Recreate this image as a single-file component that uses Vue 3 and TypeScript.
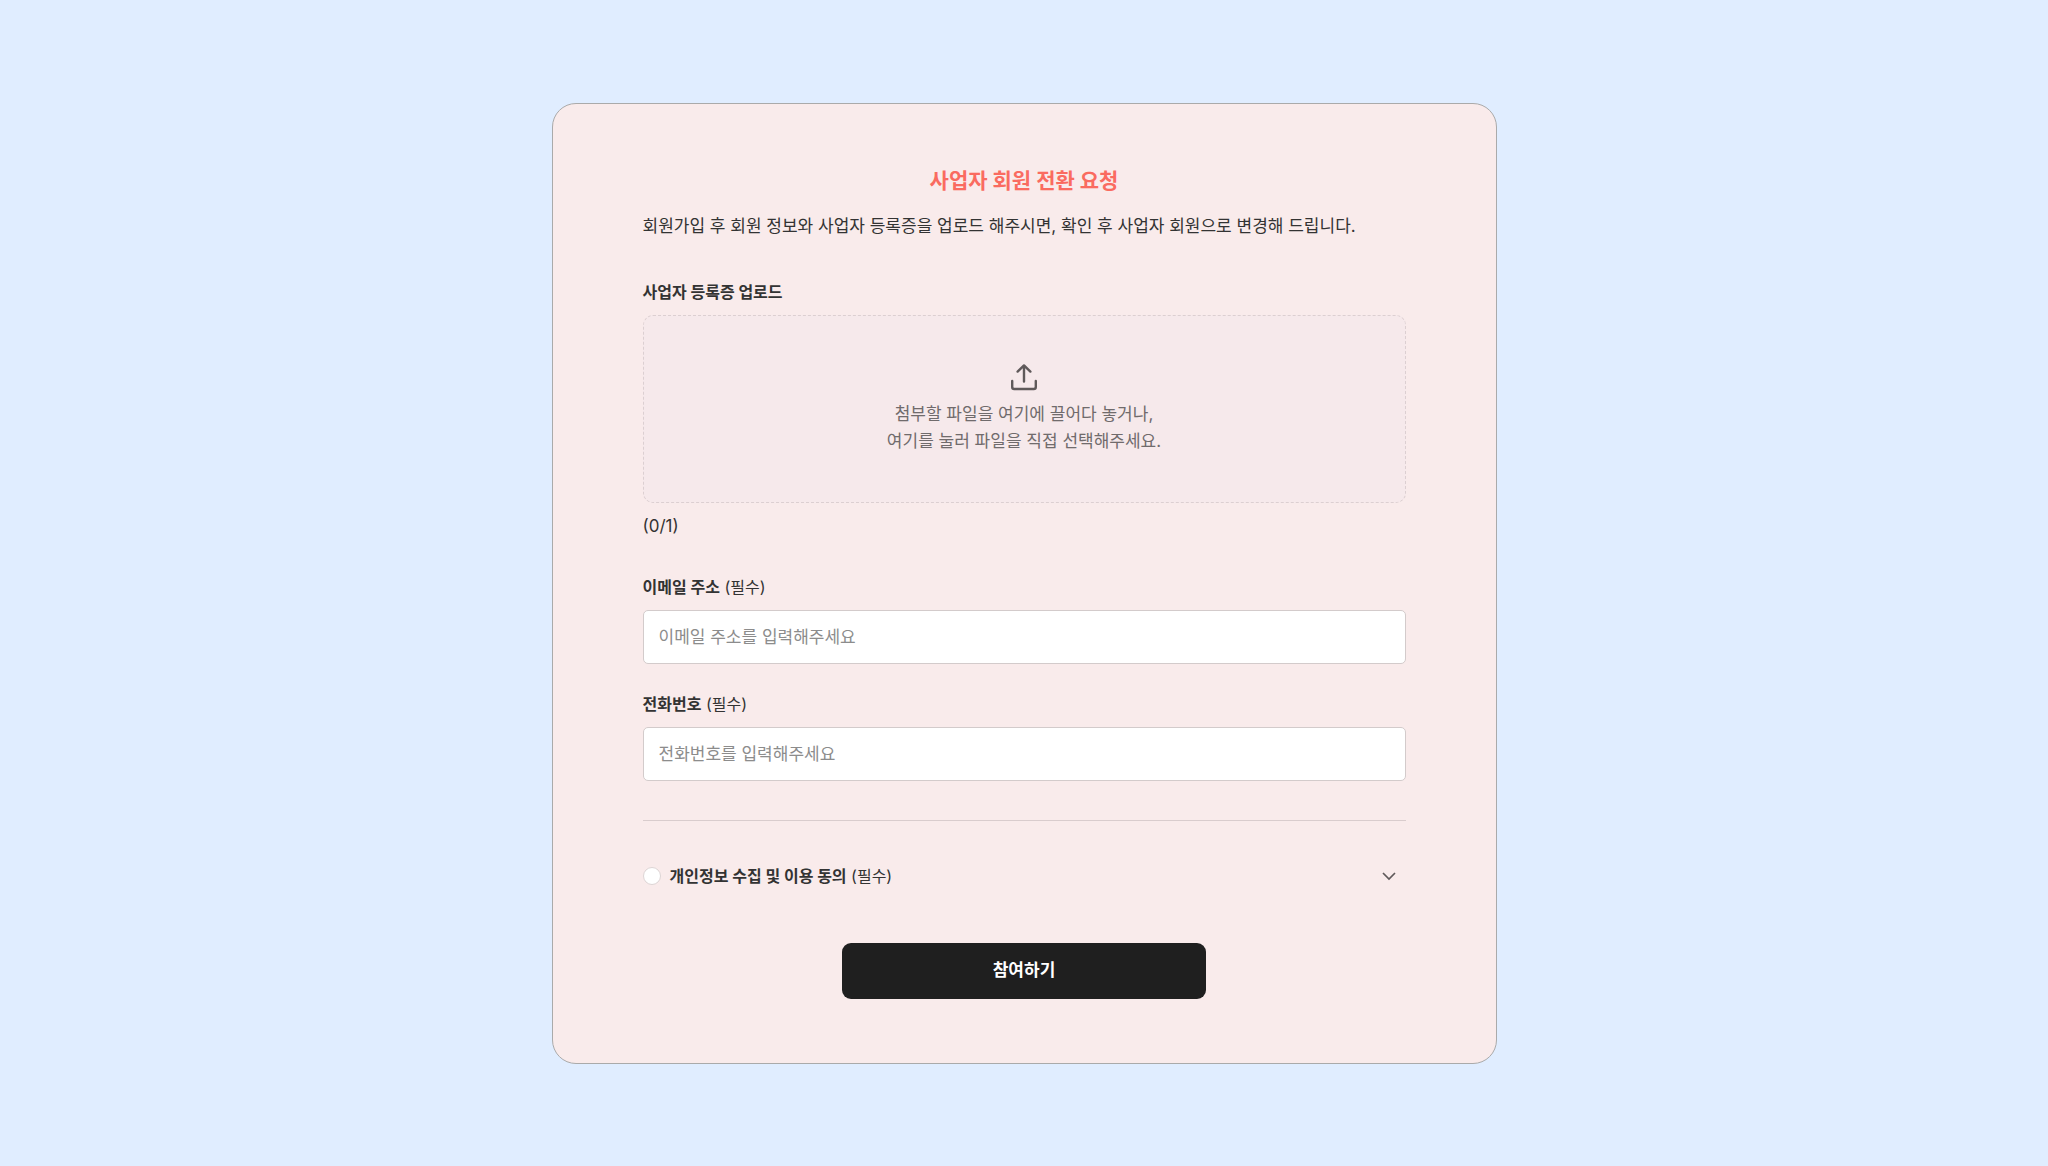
<script setup lang="ts">
import { ref } from 'vue'

const email = ref('')
const phone = ref('')
const agreed = ref(false)
const files = ref<File[]>([])
const maxFiles = 1

function onFileChange(event: Event) {
  const input = event.target as HTMLInputElement
  files.value = Array.from(input.files ?? []).slice(0, maxFiles)
}

function onDrop(event: DragEvent) {
  files.value = Array.from(event.dataTransfer?.files ?? []).slice(0, maxFiles)
}
</script>

<template>
  <main class="page">
    <form class="card" @submit.prevent>
      <h1 class="title">사업자 회원 전환 요청</h1>
      <p class="description">회원가입 후 회원 정보와 사업자 등록증을 업로드 해주시면, 확인 후 사업자 회원으로 변경해 드립니다.</p>

      <section class="field">
        <label class="label" for="license"><strong>사업자 등록증 업로드</strong></label>
        <label class="dropzone" for="license" @dragover.prevent @drop.prevent="onDrop">
          <svg class="upload-icon" viewBox="0 0 32 32" aria-hidden="true">
            <path d="M16 20.500V4.400M9.600 10.600L16 4.400l6.400 6.200M4.200 20v6a2 2 0 0 0 2 2h19.600a2 2 0 0 0 2-2v-6" />
          </svg>
          <span>첨부할 파일을 여기에 끌어다 놓거나,<br />여기를 눌러 파일을 직접 선택해주세요.</span>
        </label>
        <input id="license" class="visually-hidden" type="file" @change="onFileChange" />
        <p class="count">({{ files.length }}/{{ maxFiles }})</p>
      </section>

      <div class="field">
        <label class="label" for="email"><strong>이메일 주소</strong> (필수)</label>
        <input id="email" v-model="email" class="text-input" type="email" placeholder="이메일 주소를 입력해주세요" />
      </div>

      <div class="field">
        <label class="label" for="phone"><strong>전화번호</strong> (필수)</label>
        <input id="phone" v-model="phone" class="text-input" type="tel" placeholder="전화번호를 입력해주세요" />
      </div>

      <div class="agreement">
        <input id="agree" v-model="agreed" class="check" type="checkbox" />
        <label class="label agree-label" for="agree"><strong>개인정보 수집 및 이용 동의</strong> (필수)</label>
        <button class="toggle" type="button" aria-label="약관 펼치기">
          <svg viewBox="0 0 16 16" aria-hidden="true"><path d="M2 5l6 6 6-6" /></svg>
        </button>
      </div>

      <button class="submit" type="submit">참여하기</button>
    </form>
  </main>
</template>

<style>
body {
  margin: 0;
  background: #e0edff;
}
</style>

<style scoped>
.page,
.page * {
  box-sizing: border-box;
}

.page {
  min-height: 100vh;
  display: flex;
  align-items: center;
  justify-content: center;
  padding: 40px 20px;
  font-family: Inter, 'Noto Sans CJK KR', sans-serif;
  color: #333;
}

.card {
  width: 100%;
  max-width: 945px;
  display: flex;
  flex-direction: column;
  padding: 61px 90px 64px;
  border: 1px solid #aaa;
  border-radius: 24px;
  background: #f9ebeb;
}

.title {
  margin: 0 0 16px;
  font-size: 21px;
  font-weight: 700;
  line-height: 32px;
  text-align: center;
  color: #fa6b60;
}

.description {
  margin: 0 0 40px;
  font-size: 17px;
  line-height: 27px;
}

.field {
  display: flex;
  flex-direction: column;
  position: relative;
  margin-bottom: 28px;
}

section.field {
  margin-bottom: 37px;
}

.label {
  font-size: 16px;
  line-height: 24px;
}

.label strong {
  font-weight: 700;
}

.dropzone {
  display: flex;
  flex-direction: column;
  align-items: center;
  gap: 8px;
  margin: 11px 0;
  padding: 45px 20px 47px;
  border: 1px dashed #dccfd1;
  border-radius: 10px;
  background: #f6e9eb;
  font-size: 17px;
  line-height: 27px;
  text-align: center;
  color: #706b6c;
  cursor: pointer;
}

.upload-icon {
  width: 32px;
  height: 32px;
  fill: none;
  stroke: #5f595a;
  stroke-width: 2.4;
  stroke-linecap: round;
  stroke-linejoin: round;
}

.visually-hidden {
  position: absolute;
  width: 1px;
  height: 1px;
  overflow: hidden;
  opacity: 0;
}

.count {
  margin: 0;
  font-size: 17px;
  line-height: 24px;
}

.text-input {
  width: 100%;
  height: 54px;
  margin-top: 11px;
  padding: 0 15px;
  border: 1px solid #d3cbcb;
  border-radius: 5px;
  outline: none;
  background: #fff;
  font: inherit;
  font-size: 17px;
  color: #333;
}

.text-input::placeholder {
  color: #8c8c8c;
}

.agreement {
  display: flex;
  align-items: center;
  margin-top: 11px;
  padding: 43px 9px 55px 0;
  border-top: 1px solid #d9cccd;
}

.check {
  appearance: none;
  width: 18px;
  height: 18px;
  margin: 0;
  border: 1px solid #ddd5d5;
  border-radius: 50%;
  background: #fff;
}

.check:checked {
  background: #1f1f1f;
}

.agree-label {
  flex: 1;
  padding-left: 9px;
}

.toggle {
  display: flex;
  padding: 0;
  border: 0;
  background: none;
  cursor: pointer;
}

.toggle svg {
  width: 16px;
  height: 16px;
  fill: none;
  stroke: #5f595a;
  stroke-width: 1.7;
}

.submit {
  align-self: center;
  width: 100%;
  max-width: 364px;
  height: 56px;
  padding: 0 0 4px;
  border: 0;
  border-radius: 9px;
  background: #1f1f1f;
  font: inherit;
  font-size: 17px;
  font-weight: 700;
  color: #fff;
  cursor: pointer;
}
</style>
